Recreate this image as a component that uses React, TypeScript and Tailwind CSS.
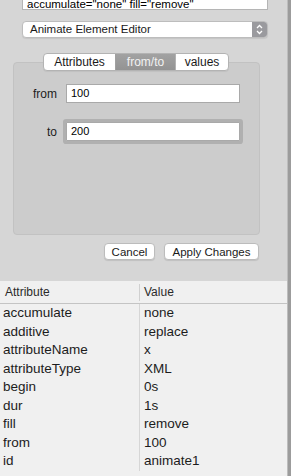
import React from 'react';

const rows: [string, string][] = [
  ['accumulate', 'none'],
  ['additive', 'replace'],
  ['attributeName', 'x'],
  ['attributeType', 'XML'],
  ['begin', '0s'],
  ['dur', '1s'],
  ['fill', 'remove'],
  ['from', '100'],
  ['id', 'animate1'],
];

const Stepper = () => (
  <svg width="15" height="17" viewBox="0 0 15 17">
    <path d="M5 7 L7.5 4.5 L10 7" stroke="#fff" strokeWidth="1.3" fill="none" />
    <path d="M5 10 L7.5 12.5 L10 10" stroke="#fff" strokeWidth="1.3" fill="none" />
  </svg>
);

const Field = ({ label, value, focused }: { label: string; value: string; focused?: boolean }) => (
  <div className="flex items-center gap-[9px] shrink-0">
    <label className="w-[43px] text-right text-[12px] text-[#1c1c1c]">{label}</label>
    <div
      className={`w-[174px] h-[19px] bg-white border border-[#a9a9a9] flex items-center pl-[4px] text-[11px] text-black ${
        focused ? 'ring-[3px] ring-[#b0b0b0] rounded-[1px]' : ''
      }`}
    >
      {value}
    </div>
  </div>
);

export default function App() {
  return (
    <div className="w-[291px] h-[476px] overflow-hidden flex bg-[#d6d6d6] font-['Liberation_Sans',Arial,sans-serif]">
      <div className="flex-1 flex flex-col min-w-0 overflow-hidden">
        {/* Source text box (scrolled) */}
        <div className="shrink-0 ml-[22px] w-[246px] h-[10px] overflow-hidden bg-white border-x border-b border-[#b5b5b5]">
          <div className="mt-[-3.5px] pl-[4px] leading-[14px] text-[11.5px] text-black whitespace-nowrap">
            accumulate="none" fill="remove"
          </div>
        </div>

        {/* Editor select */}
        <div className="shrink-0 ml-[22px] mt-[11px] w-[246px] h-[17px] flex bg-white border border-[#bdbdbd] rounded-[4px] shadow-[0_1px_1px_rgba(0,0,0,0.08)] overflow-hidden">
          <div className="flex-1 flex items-center pl-[7px] text-[11.5px] text-[#1a1a1a]">
            Animate Element Editor
          </div>
          <div className="w-[15px] flex items-center justify-center bg-[#9a9a9e]">
            <Stepper />
          </div>
        </div>

        {/* Tabs */}
        <div className="shrink-0 relative z-10 mt-[15px] ml-[43px] w-[186px] h-[18px] flex bg-white border border-[#b3b3b3] rounded-[4px] overflow-hidden text-[12px] shadow-[0_1px_1px_rgba(0,0,0,0.06)]">
          <div className="w-[71px] flex items-center justify-center text-[#1a1a1a]">Attributes</div>
          <div className="w-[60px] flex items-center justify-center border-l border-[#a0a0a0] bg-gradient-to-b from-[#a2a2a2] to-[#939393] text-[#f2f2f2]">
            from/to
          </div>
          <div className="w-[53px] flex items-center justify-center border-l border-[#b3b3b3] text-[#1a1a1a]">values</div>
        </div>
        <div className="shrink-0 mt-[-9px] ml-[13px] w-[247px] h-[173px] bg-[#cccccc] border border-[#c2c2c2] rounded-[4px] pt-[21px] flex flex-col gap-[19px]">
          <Field label="from" value="100" />
          <Field label="to" value="200" focused />
        </div>

        {/* Buttons */}
        <div className="shrink-0 mt-[8px] pr-[28px] flex justify-end gap-[9px]">
          <button className="w-[51px] h-[17px] bg-white border border-[#bcbcbc] rounded-[4px] shadow-[0_1px_1px_rgba(0,0,0,0.1)] text-[11.5px] text-[#1a1a1a]">
            Cancel
          </button>
          <button className="w-[95px] h-[17px] bg-white border border-[#bcbcbc] rounded-[4px] shadow-[0_1px_1px_rgba(0,0,0,0.1)] text-[11.5px] text-[#1a1a1a]">
            Apply Changes
          </button>
        </div>

        {/* Attribute table */}
        <div className="shrink-0 mt-[21px] h-[200px] bg-[#f0f0f0]">
          <div className="h-[23px] flex items-center border-b border-[#c4c4c4] text-[12px] text-[#2a2a2a]">
            <div className="w-[140px] h-[17px] flex items-center pl-[5px] border-r border-[#d0d0d0]">Attribute</div>
            <div className="pl-[4px]">Value</div>
          </div>
          <div className="flex flex-col">
            {rows.map(([name, value]) => (
              <div key={name} className="shrink-0 h-[18.5px] flex text-[13.5px] text-[#1c1c1c] leading-[18.5px]">
                <div className="w-[140px] pl-[3px] border-r border-[#d6d6d6]">{name}</div>
                <div className="pl-[4px]">{value}</div>
              </div>
            ))}
          </div>
        </div>
      </div>
      <div className="w-[4px] flex shrink-0">
        <div className="w-[1px] bg-[#bdbdbd]" />
        <div className="flex-1 bg-[#9c9c9c]" />
      </div>
    </div>
  );
}
